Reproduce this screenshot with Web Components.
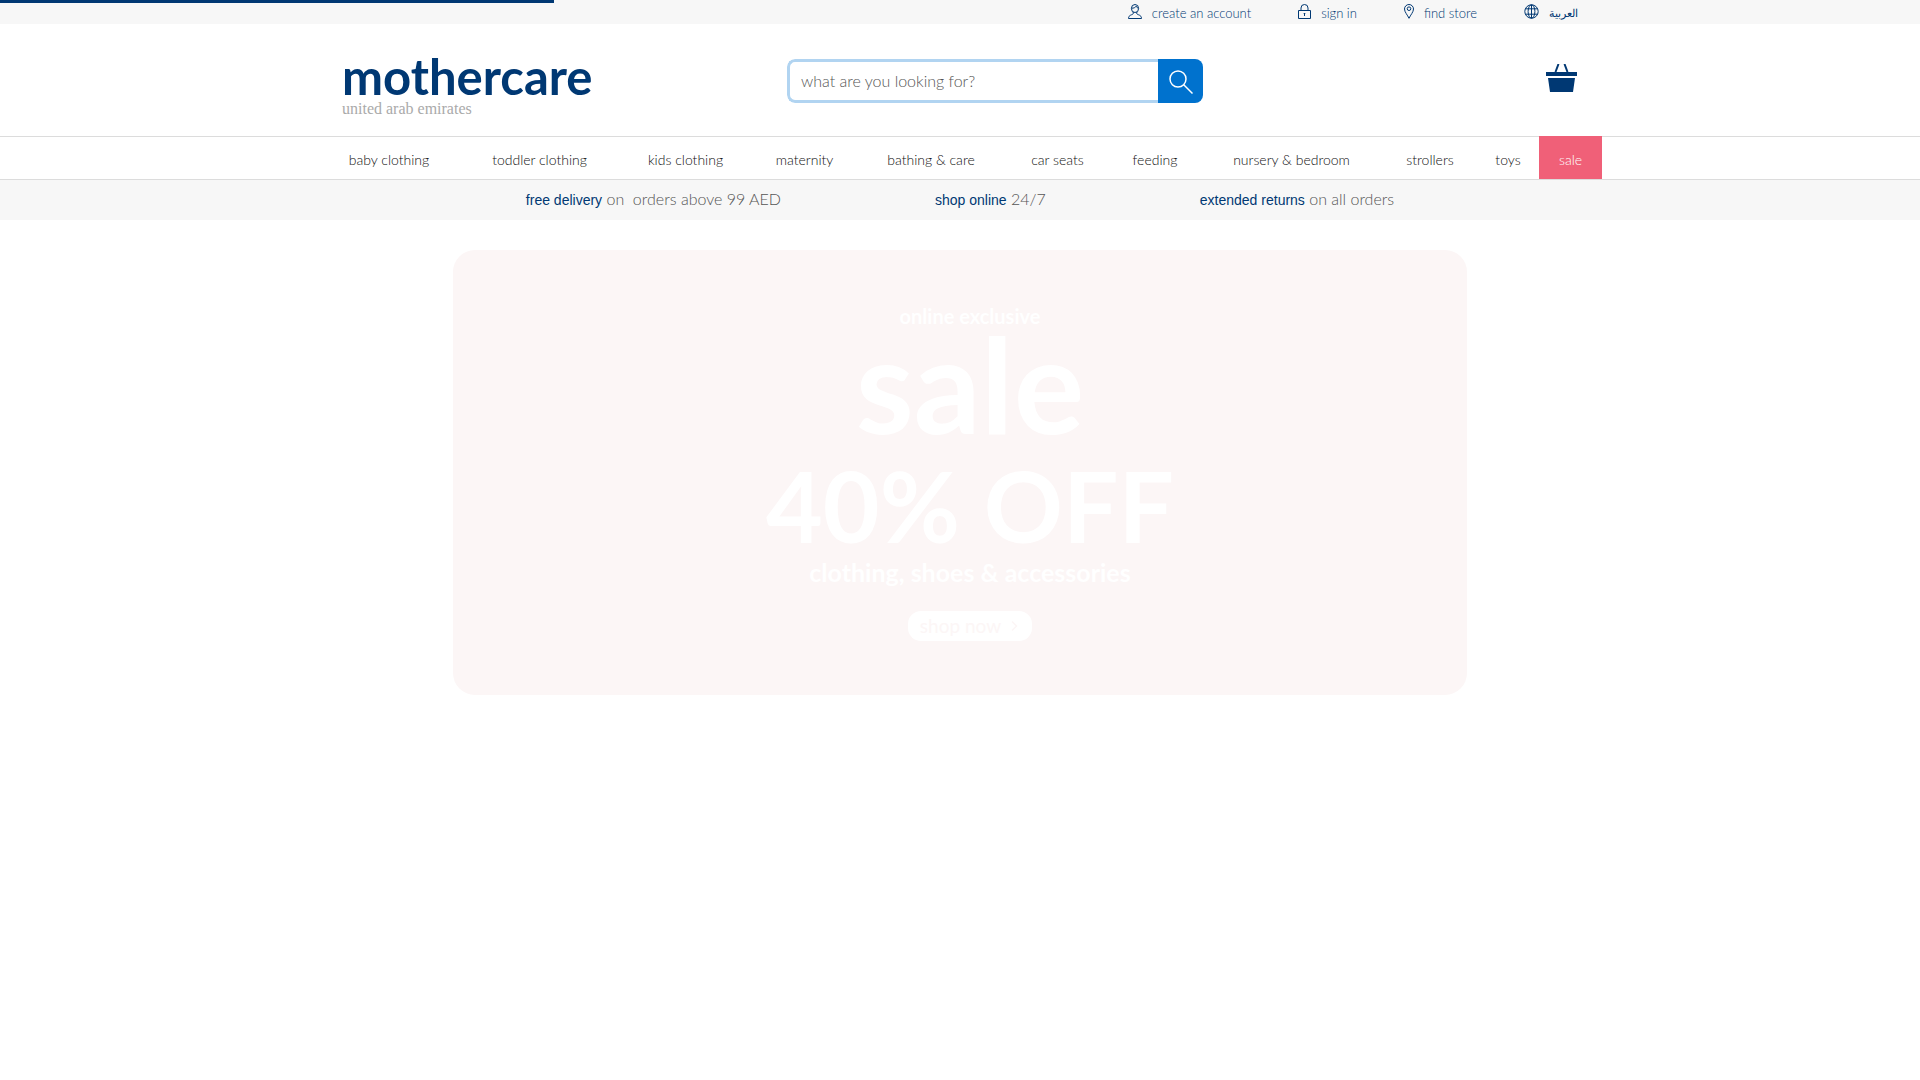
<!DOCTYPE html>
<html lang="en">
<head>
<meta charset="utf-8">
<title>mothercare united arab emirates</title>
<style>
:root {
  --navy: #003873;
  --blue: #0072ce;
  --grey: #f7f7f7;
  --line: #dcdcdc;
  --page: 1284px;
}

body {
  margin: 0;
  background: #fff;
  font-family: Lato, "DejaVu Sans", sans-serif;
  font-weight: 300;
}
</style>
</head>
<body>
<mc-progress></mc-progress>
<mc-topbar>
  <mc-top-link icon="user">create an account</mc-top-link>
  <mc-top-link icon="lock">sign in</mc-top-link>
  <mc-top-link icon="pin">find store</mc-top-link>
  <mc-top-link icon="globe" lang="ar">العربية</mc-top-link>
</mc-topbar>
<mc-header>
  <mc-logo slot="logo" country="united arab emirates">mothercare</mc-logo>
  <mc-search slot="search"></mc-search>
  <mc-basket slot="basket"></mc-basket>
</mc-header>
<mc-nav></mc-nav>
<mc-usp-bar>
  <mc-usp><span slot="title">free delivery</span>on&nbsp; orders above 99 AED</mc-usp>
  <mc-usp><span slot="title">shop online</span>24/7</mc-usp>
  <mc-usp><span slot="title">extended returns</span>on all orders</mc-usp>
</mc-usp-bar>
<mc-hero>
  <span slot="intro">online exclusive</span>
  <span slot="title">sale</span>
  <span slot="offer">40% OFF</span>
  <span slot="detail">clothing, shoes &amp; accessories</span>
  <span slot="action">shop now</span>
</mc-hero>

<script>
/**
 * Attaches an open shadow root filled with the given markup.
 * @param {Element} element - host element
 * @param {string} html - styles and markup of the element
 */
function render (element, html) {
  const template = document.createElement('template')
  template.innerHTML = html
  element.attachShadow({ mode: 'open' })
    .appendChild(document.importNode(template.content, true))
}

const icons = {
  user: `<svg width="14" height="15" viewBox="0 0 14 15">
    <ellipse cx="7" cy="4.500" rx="3.600" ry="4"/>
    <path d="M3.500 4.200C5.500 4.400 7.500 3.500 8.200 2.200C8.600 3.400 9.400 4 10.500 4.200M5.200 8v1.800C4.600 11 .5 10.600.5 14.500h13c0-3.900-4.100-3.500-4.700-4.700V8"/>
  </svg>`,
  lock: `<svg width="13" height="15" viewBox="0 0 13 15">
    <path d="M.5 6.500h12v8H.5zM3 6.500V4a3.500 3.500 0 0 1 7 0v2.500M6.500 9v3M5.700 9.500h1.600"/>
  </svg>`,
  pin: `<svg width="10" height="15" viewBox="0 0 10 15">
    <path d="M5 14.300C3.500 11 .5 8 .5 5a4.500 4.500 0 0 1 9 0c0 3-3 6-4.500 9.300z"/>
    <circle cx="5" cy="4.700" r="1.800"/>
  </svg>`,
  globe: `<svg width="15" height="15" viewBox="0 0 15 15">
    <circle cx="7.500" cy="7.500" r="6.700"/>
    <ellipse cx="7.500" cy="7.500" rx="3.400" ry="6.700"/>
    <path d="M7.500 1v13M1.500 4.800h12M1.500 10.200h12"/>
  </svg>`
}

// Page load indicator, lies over the top bar
class Progress extends HTMLElement {
  constructor () {
    super()
    render(this, `
<style>
:host {
  position: fixed;
  top: 0;
  left: 0;
  width: 28.85%;
  height: 3px;
  background: var(--navy);
}
</style>`)
  }
}

class TopBar extends HTMLElement {
  constructor () {
    super()
    render(this, `
<style>
:host {
  display: block;
  background: var(--grey);
}

nav {
  display: flex;
  justify-content: flex-end;
  gap: 47px;
  max-width: var(--page);
  height: 24px;
  margin: 0 auto;
  padding-right: 24px;
  box-sizing: border-box;
}
</style>
<nav aria-label="account"><slot></slot></nav>`)
  }
}

class TopLink extends HTMLElement {
  constructor () {
    super()
    render(this, `
<style>
:host {
  display: block;
  color: var(--navy);
  font-size: 13px;
  line-height: 26px;
}

:host([lang="ar"]) {
  font-size: 11px;
}

a {
  display: flex;
  gap: 10px;
  color: inherit;
  text-decoration: none;
  white-space: nowrap;
}

svg {
  margin-top: 4px;
  fill: none;
  stroke: currentColor;
}
</style>
<a href="#">${icons[this.getAttribute('icon')]}<span><slot></slot></span></a>`)
  }
}

class Header extends HTMLElement {
  constructor () {
    super()
    render(this, `
<style>
:host {
  display: block;
}

header {
  display: grid;
  grid-template-columns: 469fr 416fr 399fr;
  align-items: start;
  max-width: var(--page);
  height: 112px;
  margin: 0 auto;
}

slot[name="logo"]::slotted(*) {
  margin: 28px 0 0 24px;
}

slot[name="search"]::slotted(*) {
  margin-top: 35px;
}

slot[name="basket"]::slotted(*) {
  justify-self: end;
  margin: 40px 25px 0 0;
}
</style>
<header>
  <slot name="logo"></slot>
  <slot name="search"></slot>
  <slot name="basket"></slot>
</header>`)
  }
}

class Logo extends HTMLElement {
  constructor () {
    super()
    render(this, `
<style>
:host {
  display: block;
}

a {
  display: block;
  text-decoration: none;
  color: var(--navy);
  font-size: 49px;
  font-weight: 700;
  line-height: 48px;
}

p {
  margin: 0;
  color: #aaa;
  font: 16px/18px "Liberation Serif", serif;
}
</style>
<a href="#"><slot></slot></a>
<p>${this.getAttribute('country')}</p>`)
  }
}

class Search extends HTMLElement {
  constructor () {
    super()
    render(this, `
<style>
:host {
  display: block;
}

form {
  display: flex;
  height: 44px;
  border-radius: 8px;
  overflow: hidden;
}

input {
  flex: 1;
  min-width: 0;
  box-sizing: border-box;
  padding: 0 11px 2px;
  border: 3px solid #b1d4f1;
  border-right: 0;
  border-radius: 8px 0 0 8px;
  outline: 0;
  background: #fff;
  color: #333;
  font-family: inherit;
  font-size: 16px;
  font-weight: 300;
}

input::placeholder {
  color: #555;
}

button {
  display: grid;
  place-items: center;
  width: 45px;
  padding: 2px 0 0;
  border: 0;
  background: var(--blue);
}
</style>
<form role="search">
  <input type="text" aria-label="search" placeholder="what are you looking for?">
  <button type="button" aria-label="search">
    <svg width="24" height="24" viewBox="0 0 24 24" fill="none" stroke="#fff" stroke-width="1.500">
      <circle cx="9" cy="9" r="8"/>
      <path d="M14.500 14.500l9 9"/>
    </svg>
  </button>
</form>`)
  }
}

class Basket extends HTMLElement {
  constructor () {
    super()
    render(this, `
<style>
:host {
  display: block;
}

a, svg {
  display: block;
}

a {
  color: var(--navy);
}
</style>
<a href="#" aria-label="basket">
  <svg width="31" height="28" viewBox="0 0 31 28" fill="currentColor">
    <path d="M0 8h31v4H0zM2 14h27l-2 14H4z"/>
    <path d="M12.500 0L9.500 8M18.500 0l3 8" stroke="currentColor" stroke-width="2"/>
  </svg>
</a>`)
  }
}

class Nav extends HTMLElement {
  constructor () {
    super()
    const items = ['baby clothing', 'toddler clothing', 'kids clothing',
      'maternity', 'bathing &amp; care', 'car seats', 'feeding',
      'nursery &amp; bedroom', 'strollers', 'toys', 'sale']
    render(this, `
<style>
:host {
  display: block;
  border-top: 1px solid var(--line);
  border-bottom: 1px solid var(--line);
}

ul {
  display: grid;
  grid-template-columns: 142fr 159fr 133fr 105fr 148fr 105fr 90fr 183fr 94fr 62fr 63fr;
  max-width: var(--page);
  margin: 0 auto;
  padding: 0;
  list-style: none;
}

a {
  display: block;
  padding: 4px 0 0;
  color: #111;
  font-size: 14px;
  line-height: 38px;
  text-align: center;
  text-decoration: none;
  white-space: nowrap;
}

/* The sale tab also covers the top border */
li:last-child a {
  margin-top: -1px;
  padding-top: 5px;
  background: #f06078;
  color: #fff;
}
</style>
<nav aria-label="categories">
  <ul>${items.map(item => `<li><a href="#">${item}</a></li>`).join('')}</ul>
</nav>`)
  }
}

class UspBar extends HTMLElement {
  constructor () {
    super()
    render(this, `
<style>
:host {
  display: flex;
  justify-content: center;
  gap: 154px;
  height: 40px;
  background: var(--grey);
}
</style>
<slot></slot>`)
  }
}

class Usp extends HTMLElement {
  constructor () {
    super()
    render(this, `
<style>
:host {
  display: block;
  color: #555;
  font-size: 16px;
  line-height: 38px;
  white-space: nowrap;
}

b {
  color: var(--navy);
  font: 14px "Liberation Sans", sans-serif;
}
</style>
<b><slot name="title"></slot></b> <slot></slot>`)
  }
}

class Hero extends HTMLElement {
  constructor () {
    super()
    render(this, `
<style>
:host {
  display: block;
  max-width: 1014px;
  margin: 30px auto 0;
  border-radius: 22px;
  background: #fcf6f6;
  color: #fff;
  font-weight: 700;
}

a {
  display: flex;
  flex-direction: column;
  align-items: center;
  padding: 52px 0 54px 20px;
  color: inherit;
  text-decoration: none;
}

.intro {
  font-size: 20px;
  line-height: 28px;
}

.title {
  font-size: 132px;
  line-height: 106px;
}

.offer {
  margin-top: 18px;
  font-size: 98px;
  line-height: 102px;
}

.detail {
  font-size: 25px;
  line-height: 32px;
}

.action {
  display: flex;
  align-items: center;
  gap: 10px;
  margin-top: 23px;
  padding: 0 14px 0 12px;
  border-radius: 13px;
  background: #fff;
  color: #fcf6f6;
  font-size: 19px;
  font-weight: 400;
  line-height: 30px;
}
</style>
<a href="#">
  <div class="intro"><slot name="intro"></slot></div>
  <div class="title"><slot name="title"></slot></div>
  <div class="offer"><slot name="offer"></slot></div>
  <div class="detail"><slot name="detail"></slot></div>
  <div class="action">
    <slot name="action"></slot>
    <svg width="7" height="10" viewBox="0 0 7 10" fill="none" stroke="currentColor" stroke-width="1.500"><path d="M1 .5L5.500 5L1 9.500"/></svg>
  </div>
</a>`)
  }
}

window.customElements.define('mc-progress', Progress)
window.customElements.define('mc-topbar', TopBar)
window.customElements.define('mc-top-link', TopLink)
window.customElements.define('mc-header', Header)
window.customElements.define('mc-logo', Logo)
window.customElements.define('mc-search', Search)
window.customElements.define('mc-basket', Basket)
window.customElements.define('mc-nav', Nav)
window.customElements.define('mc-usp-bar', UspBar)
window.customElements.define('mc-usp', Usp)
window.customElements.define('mc-hero', Hero)
</script>
</body>
</html>
